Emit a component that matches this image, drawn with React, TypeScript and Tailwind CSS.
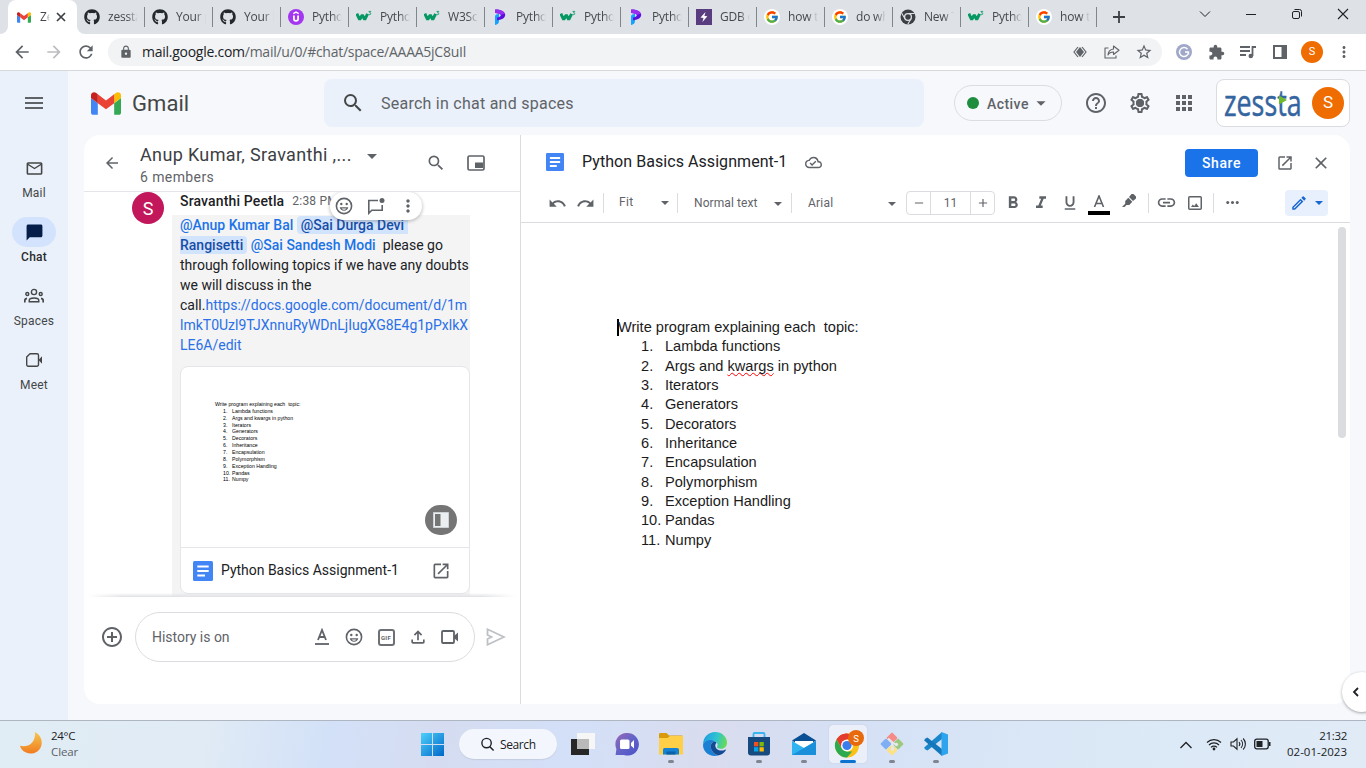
import React from "react";
import {
  MdMenu, MdSearch, MdArrowBack, MdArrowForward, MdRefresh, MdLock, MdMailOutline, MdChatBubble,
  MdHelpOutline, MdOutlineSettings, MdApps, MdMoreVert, MdOpenInNew,
  MdAddCircleOutline, MdFormatBold, MdFormatItalic, MdFormatUnderlined, MdLink,
  MdMoreHoriz, MdClose, MdStarOutline, MdExtension, MdOutlineModeEdit, MdArrowDropDown,
  MdOutlineCloudDone, MdAdd, MdRemove, MdOutlineFileUpload,
} from "react-icons/md";
import { FaGithub } from "react-icons/fa";
import { FcGoogle } from "react-icons/fc";

function GmailMark({ className }: { className: string }) {
  return (
    <svg viewBox="52 42 88 66" className={className}>
      <path fill="#4285f4" d="M58 108h14V74L52 59v43c0 3.32 2.69 6 6 6" />
      <path fill="#34a853" d="M120 108h14c3.32 0 6-2.69 6-6V59l-20 15" />
      <path fill="#fbbc04" d="M120 48v26l20-15v-8c0-7.42-8.47-11.65-14.4-7.2" />
      <path fill="#ea4335" d="M72 74V48l24 18 24-18v26L96 92" />
      <path fill="#c5221f" d="M52 51v8l20 15V48l-5.6-4.2c-5.94-4.45-14.4-.22-14.4 7.2" />
    </svg>
  );
}

const GitHubIcon = () => <FaGithub className="size-4 text-[#24292e]" />;
const UdemyIcon = () => (
  <svg viewBox="0 0 16 16" className="size-4">
    <circle cx="8" cy="8" r="8" fill="#a435f0" />
    <path d="M5.3 4.6 8 3.1l2.700 1.500" fill="none" stroke="#fff" strokeWidth="1.300" />
    <path d="M5.900 6.500v3.300a2.100 2.100 0 0 0 4.200 0V6.500" fill="none" stroke="#fff" strokeWidth="1.800" />
  </svg>
);
const W3Icon = () => (
  <svg viewBox="0 0 16 16" className="size-4">
    <path d="M0.8 4.6 3.7 10.6 6.3 6 8.7 10.6 11.6 4.8" fill="none" stroke="#059862" strokeWidth="3" strokeLinejoin="bevel" />
    <path d="M12.6 2.4h2.2l-1.2 1.5c1 0 1.3.6 1.1 1.2-.3.7-1.4.7-2 .3" fill="none" stroke="#059862" strokeWidth=".9" />
  </svg>
);
const ProgramizIcon = () => (
  <svg viewBox="0 0 16 16" className="size-4">
    <path d="M3 7.500C3 5.800 4.500 4.800 7 5v7c0 2-1.500 3.700-4 4z" fill="#14a4ff" />
    <path d="M3.200.4C7 .2 13.200 2 13.200 5.800c0 3.400-3.800 5.200-8.200 5.400V8.400c2-.2 3.800-1 3.800-2.200C8.800 4.900 6 4.200 3.200 4z" fill="#5b10e0" />
    <path d="M3.200.4C7 .2 11.800 1.800 12.900 4.400L8.800 6C8.500 4.900 6 4.200 3.200 4z" fill="#9b2ff0" />
  </svg>
);
const GdbIcon = () => (
  <svg viewBox="0 0 16 16" className="size-4">
    <path d="M0 0h16v16H0z" fill="#5a3d7e" />
    <path d="M9.5 3 4.5 8.6l3 .3L6.4 13l5-5.7-3-.3z" fill="#fff" />
  </svg>
);
const GoogleIcon = () => (
  <span className="flex size-4 items-center justify-center rounded-full bg-white">
    <FcGoogle className="size-[14px]" />
  </span>
);
const MonoChromeIcon = () => (
  <svg viewBox="0 0 16 16" className="size-4">
    <circle cx="8" cy="8" r="7.5" fill="#3c4043" />
    <circle cx="8" cy="8" r="3.4" fill="#3c4043" stroke="#dee1e6" strokeWidth="1.3" />
    <path d="M8 4.5h6.6M5 9.8 1.7 4.2M10.9 9.8 7.7 15.4" stroke="#dee1e6" strokeWidth="1.1" />
  </svg>
);

const tabs = [
  { Icon: GitHubIcon, title: "zessta" }, { Icon: GitHubIcon, title: "Your p" }, { Icon: GitHubIcon, title: "Your R" },
  { Icon: UdemyIcon, title: "Python" }, { Icon: W3Icon, title: "Python" }, { Icon: W3Icon, title: "W3Sch" },
  { Icon: ProgramizIcon, title: "Python" }, { Icon: W3Icon, title: "Python" }, { Icon: ProgramizIcon, title: "Python" },
  { Icon: GdbIcon, title: "GDB o" }, { Icon: GoogleIcon, title: "how t" }, { Icon: GoogleIcon, title: "do wh" },
  { Icon: MonoChromeIcon, title: "New T" }, { Icon: W3Icon, title: "Python" }, { Icon: GoogleIcon, title: "how t" },
];

function TabStrip() {
  return (
    <div className="flex h-[34px] bg-[#dee1e6] font-['Open_Sans',sans-serif] text-[12px] tracking-[-0.2px] text-[#45494d]">
      <div className="flex w-2 items-end bg-white">
        <div className="h-full w-2 rounded-br-lg bg-[#dee1e6]" />
      </div>
      <div className="flex w-[69px] items-center rounded-t-lg bg-white pl-[9px]">
        <GmailMark className="h-[11px] w-[14px]" />
        <span className="ml-[9px] w-[10px] overflow-hidden whitespace-nowrap [mask-image:linear-gradient(to_right,black_55%,transparent)]">Zes</span>
        <svg viewBox="0 0 10 10" className="ml-[6px] size-[10px]"><path d="M1 1l8 8M9 1 1 9" stroke="#3c4043" strokeWidth="1.7" /></svg>
      </div>
      {tabs.map(({ Icon, title }, i) => (
        <div key={i} className={i === 0 ? "flex w-[68px] items-center bg-white" : "flex w-[68px] items-center"}>
          <div className={i === 0 ? "flex h-full w-[67px] items-center rounded-bl-lg bg-[#dee1e6] pl-[7px]" : "flex w-[67px] items-center pl-[7px]"}>
            <Icon />
            <span className="ml-2 w-[30px] overflow-hidden whitespace-nowrap [mask-image:linear-gradient(to_right,black_65%,transparent)]">{title}</span>
          </div>
          <div className={i === 0 ? "flex h-full w-px items-center bg-[#dee1e6]" : "flex h-full w-px items-center"}><div className="h-5 w-px bg-[#80868b]" /></div>
        </div>
      ))}
      <div className="flex w-11 items-center justify-center">
        <svg viewBox="0 0 12 12" className="size-3"><path d="M6 0v12M0 6h12" stroke="#3c4043" strokeWidth="1.8" /></svg>
      </div>
      <div className="ml-auto flex h-7 w-[184px] items-center text-[#202124]">
        <div className="flex w-[46px] justify-center"><svg viewBox="0 0 12 12" className="size-3"><path d="M1 3.5 6 8.5l5-5" fill="none" stroke="currentColor" /></svg></div>
        <div className="flex w-[46px] justify-center"><svg viewBox="0 0 12 12" className="size-3"><path d="M1 6.5h10" stroke="currentColor" /></svg></div>
        <div className="flex w-[46px] justify-center"><svg viewBox="0 0 12 12" className="size-3"><rect x="1.5" y="3.5" width="7" height="7" rx="1.5" fill="none" stroke="currentColor" /><path d="M3.5 1.5h5a2 2 0 0 1 2 2v5" fill="none" stroke="currentColor" /></svg></div>
        <div className="flex w-[46px] justify-center"><svg viewBox="0 0 12 12" className="size-3"><path d="m1 1 10 10M11 1 1 11" stroke="currentColor" strokeWidth="1.1" /></svg></div>
      </div>
    </div>
  );
}

const cell32 = "flex w-8 items-center justify-center";

function AddressBar() {
  return (
    <div className="flex h-[37px] items-center border-b border-[#d6d8da] bg-white pl-[6px] pr-[6px] text-[#5f6368]">
      <div className={cell32}><MdArrowBack className="size-5" /></div>
      <div className={cell32}><MdArrowForward className="size-5 text-[#bbbdc0]" /></div>
      <div className={cell32}><MdRefresh className="size-5" /></div>
      <div className="ml-[6px] flex h-7 w-[1054px] items-center rounded-full bg-[#f1f3f4] pl-[11px] pr-[2px]">
        <MdLock className="size-[14px]" />
        <span className="-mt-px ml-[9px] font-['Open_Sans',sans-serif] text-[14px] tracking-[-0.26px] text-[#5f6368]"><span className="text-[#202124]">mail.google.com</span>/mail/u/0/#chat/space/AAAA5jC8uIl</span>
        <div className="ml-auto flex">
          <div className={cell32}>
            <svg viewBox="0 0 14 12" className="h-3 w-[14px]"><path d="M5 1 1 6l4 5M9 1l4 5-4 5" fill="none" stroke="#5f6368" strokeWidth="1.2" /><path d="m7 1 4 5-4 5-4-5z" fill="#5f6368" /></svg>
          </div>
          <div className={cell32}>
            <svg viewBox="0 0 16 14" className="h-[14px] w-4"><path d="M4.5 3H1v10h11v-2.500M9.500 4V1l5.500 4.300-5.500 4.200V7C6.500 7 5 8 4 10c.2-3.500 2-5.600 5.500-6z" fill="none" stroke="#5f6368" strokeWidth="1.1" strokeLinejoin="round" /></svg>
          </div>
          <div className={cell32}><MdStarOutline className="size-[18px]" /></div>
        </div>
      </div>
      <div className="ml-[6px] flex items-center">
        <div className={cell32}>
          <svg viewBox="0 0 16 16" className="size-4"><circle cx="8" cy="8" r="8" fill="#a0a8c9" /><path d="M11.500 5.200A4.500 4.500 0 1 0 12.500 8H9M12.500 8v2.500" fill="none" stroke="#fff" strokeWidth="1.400" /></svg>
        </div>
        <div className={cell32}><MdExtension className="size-[17px]" /></div>
        <div className={cell32}>
          <svg viewBox="0 0 16 14" className="h-[14px] w-4"><path d="M0 2h10M0 6h10M0 10h6M12.500 11V2H16" fill="none" stroke="#5f6368" strokeWidth="1.800" /><circle cx="10.800" cy="11" r="2.300" fill="#5f6368" /></svg>
        </div>
        <div className={cell32}>
          <svg viewBox="0 0 14 14" className="size-[14px]"><path d="M1 1h12v12H1z" fill="none" stroke="#5f6368" strokeWidth="2" /><path d="M8.500 1H13v12H8.500z" fill="#5f6368" /></svg>
        </div>
        <div className={cell32}><div className="flex size-[22px] items-center justify-center rounded-full bg-[#ef6c00] font-['Roboto',sans-serif] text-[11px] text-white">S</div></div>
        <div className={cell32}><MdMoreVert className="size-[18px]" /></div>
      </div>
    </div>
  );
}

const CameraIcon = () => (
  <svg viewBox="0 0 18 16" className="h-4 w-[18px]"><path d="M5 1.800h7a1.500 1.500 0 0 1 1.500 1.500v9.400a1.500 1.500 0 0 1-1.500 1.500H3.200a1.500 1.500 0 0 1-1.500-1.500V5z" fill="none" stroke="#444746" strokeWidth="1.400" strokeLinejoin="round" /><path d="M13.500 8 17 4.300v7.400z" fill="#444746" /></svg>
);
const GroupsIcon = () => (
  <svg viewBox="0 0 20 16" className="h-4 w-5" fill="none" stroke="#444746" strokeWidth="1.400">
    <circle cx="10" cy="4" r="2.600" />
    <circle cx="3.300" cy="6" r="1.500" />
    <circle cx="16.700" cy="6" r="1.500" />
    <path d="M5.200 13.800v-1.300C5.200 10.800 7.500 10 10 10s4.800.8 4.800 2.500v1.300z" />
    <path d="M.8 14.500v-2c0-1.200.8-2 2.200-2.200M19.200 14.500v-2c0-1.200-.8-2-2.200-2.200" strokeWidth="1.700" />
  </svg>
);

function Rail() {
  return (
    <nav className="flex w-[68px] flex-col items-center bg-[#eaf1fb] font-['Roboto',sans-serif] text-[#444746]">
      <MdMenu className="mt-5 size-6 text-[#5f6368]" />
      <div className="mt-[38px] flex h-16 flex-col items-center">
        <div className="flex h-[30px] w-11 items-center justify-center"><MdMailOutline className="size-[19px]" /></div>
        <span className="mt-[2px] text-[12px] leading-4 tracking-[0.2px]">Mail</span>
      </div>
      <div className="flex h-16 flex-col items-center">
        <div className="flex h-[30px] w-11 items-center justify-center rounded-full bg-[#d3e3fd]"><MdChatBubble className="size-[19px] text-[#041e49]" /></div>
        <span className="mt-[2px] text-[12px] font-medium leading-4 tracking-[0.2px] text-[#2a2b2c]">Chat</span>
      </div>
      <div className="flex h-16 flex-col items-center">
        <div className="flex h-[30px] w-11 items-center justify-center"><GroupsIcon /></div>
        <span className="mt-[2px] text-[12px] leading-4 tracking-[0.2px]">Spaces</span>
      </div>
      <div className="flex h-16 flex-col items-center">
        <div className="flex h-[30px] w-11 items-center justify-center"><CameraIcon /></div>
        <span className="mt-[2px] text-[12px] leading-4 tracking-[0.2px]">Meet</span>
      </div>
    </nav>
  );
}

function Header() {
  return (
    <header className="flex h-16 items-center pl-[23px] pr-4 font-['Roboto',sans-serif] text-[#5f6368]">
      <GmailMark className="h-[23px] w-[30px]" />
      <span className="ml-[11px] w-[192px] pt-px text-[22px] tracking-[0.05px] text-[#444746]">Gmail</span>
      <div className="flex h-12 w-[600px] items-center rounded-lg bg-[#eaf1fb] pl-[17px]">
        <MdSearch className="size-6 text-[#444746]" />
        <span className="ml-4 pt-[2px] text-[16px] tracking-[0.25px]">Search in chat and spaces</span>
      </div>
      <div className="ml-[30px] flex h-9 w-[108px] items-center rounded-full border border-[#dadce0] pl-3">
        <span className="size-3 rounded-full bg-[#1e8e3e]" />
        <span className="ml-[8px] pt-[2px] text-[14px] font-medium tracking-[0.45px]">Active</span>
        <MdArrowDropDown className="ml-px size-[22px]" />
      </div>
      <div className="ml-3 flex">
        <div className="flex w-11 justify-center"><MdHelpOutline className="size-6" /></div>
        <div className="flex w-11 justify-center">
          <div className="relative">
            <MdOutlineSettings className="size-6" />
            <span className="absolute left-2 top-2 size-2 rounded-full bg-[#5f6368]" />
          </div>
        </div>
        <div className="flex w-11 justify-center"><MdApps className="size-6" /></div>
      </div>
      <div className="ml-[10px] flex h-12 w-[134px] items-center rounded-lg border border-[#dadce0] bg-white pl-[7px]">
        <svg viewBox="0 0 80 34" className="h-[34px] w-20 shrink-0">
          <text transform="scale(.745 1)" x="0" y="30" fontFamily="Open Sans, sans-serif" fontSize="36" fill="#3465a0" stroke="#3465a0" strokeWidth=".5">zessta</text>
          <path d="M55 9.500v9l8-4.500z" fill="#6fb92c" />
        </svg>
        <div className="ml-2 flex size-8 shrink-0 items-center justify-center rounded-full bg-[#ef6c00] text-[17px] text-white">S</div>
      </div>
    </header>
  );
}

const SmileIcon = ({ className }: { className: string }) => (
  <svg viewBox="0 0 18 18" className={className}><circle cx="9" cy="9" r="7.600" fill="none" stroke="#5f6368" strokeWidth="1.600" /><circle cx="6.300" cy="7" r="1.200" fill="#5f6368" /><circle cx="11.700" cy="7" r="1.200" fill="#5f6368" /><path d="M4.700 10.300h8.600a4.400 4.400 0 0 1-8.600 0z" fill="#5f6368" /><path d="M6.600 11.600h4.800a2.900 2.900 0 0 1-4.800 0z" fill="#fff" /></svg>
);
const DocsIcon = ({ className }: { className: string }) => (
  <svg viewBox="0 0 20 20" className={className}><rect width="20" height="20" rx="1.500" fill="#4285f4" /><path d="M4.300 5.500h11.400M4.300 10h11.400M4.300 14.500h7.700" stroke="#fff" strokeWidth="2.200" /></svg>
);

const topics = [
  "Lambda functions", "Args and kwargs in python", "Iterators", "Generators", "Decorators", "Inheritance",
  "Encapsulation", "Polymorphism", "Exception Handling", "Pandas", "Numpy",
];

function ChatPanel() {
  return (
    <section className="flex w-[437px] flex-col border-r border-[#dadce0] font-['Roboto',sans-serif]">
      <div className="flex h-[57px] shrink-0 border-b border-[#e3e5e8] text-[#5f6368]">
        <MdArrowBack className="ml-[19px] mt-[19px] size-[18px]" />
        <div className="ml-[19px] w-[218px] pt-[8px]">
          <div className="whitespace-pre text-[18px] leading-6 tracking-[0.35px] text-[#3c4043]">Anup Kumar, Sravanthi ,...</div>
          <div className="text-[14px] leading-5 tracking-[0.4px]">6 members</div>
        </div>
        <MdArrowDropDown className="ml-[2px] mt-[9px] size-[24px] shrink-0" />
        <MdSearch className="ml-[42px] mt-[18px] size-5" />
        <svg viewBox="0 0 18 16" className="ml-[21px] mt-5 h-4 w-[18px]"><rect x="1" y="1" width="16" height="14" rx="1.500" fill="none" stroke="#5f6368" strokeWidth="1.700" /><path d="M8 7.500h8V13H8z" fill="#5f6368" /></svg>
      </div>
      <div className="relative flex h-[405px] shrink-0 overflow-hidden pl-12">
        <div className="flex size-8 shrink-0 items-center justify-center rounded-full bg-[#c2185b] text-[18px] text-white">S</div>
        <div className="ml-2 w-[298px]">
          <div className="flex h-6 items-start pl-2">
            <span className="text-[14px] font-medium leading-[19px] tracking-[0.15px] text-[#202124]">Sravanthi Peetla</span>
            <span className="ml-2 text-[12px] leading-[19px] tracking-[0.2px] text-[#5f6368]">2:38 PM</span>
          </div>
          <div className="h-[381px] bg-[#f4f4f4] pl-2">
            <div className="-mt-px whitespace-pre text-[14px] leading-5 text-[#202124]">
              <div className="font-medium text-[#1a73e8]">@Anup Kumar Bal <span className="rounded-l bg-[#d2e3fc] py-px pl-1 text-[#174ea6]">@Sai Durga Devi </span></div>
              <div><span className="rounded-r bg-[#d2e3fc] py-px pr-1 font-medium text-[#174ea6]">Rangisetti</span> <span className="font-medium text-[#1a73e8]">@Sai Sandesh Modi</span>  please go</div>
              <div>through following topics if we have any doubts</div>
              <div>we will discuss in the</div>
              <div>call.<span className="text-[#2a70e8]">https://docs.google.com/document/d/1m</span></div>
              <div className="text-[#2a70e8]">lmkT0Uzl9TJXnnuRyWDnLjIugXG8E4g1pPxlkX</div>
              <div className="text-[#2a70e8]">LE6A/edit</div>
            </div>
            <div className="mt-[11px] flex h-[228px] w-[290px] flex-col rounded-lg border border-[#e4e6ea] bg-white">
              <div className="flex h-[181px] justify-between border-b border-[#e4e6ea]">
                <div className="pl-[34px] pt-[34px] font-['Liberation_Sans',sans-serif] text-[5.200px] leading-[6.860px] text-black">
                  <div className="whitespace-pre">Write program explaining each  topic:</div>
                  {topics.map((t, i) => (
                    <div key={t} className="flex pl-[8px]"><span className="w-[9px]">{i + 1}.</span>{t}</div>
                  ))}
                </div>
                <div className="mr-3 mt-[138px] flex h-[30px] w-8 items-center justify-center rounded-full bg-[#757575]">
                  <svg viewBox="0 0 16 16" className="size-4"><path d="M.5.5h15v15H.5z" fill="#eceff1" stroke="#cfd2d4" /><path d="M2 2h5.500v12H2z" fill="#757575" /></svg>
                </div>
              </div>
              <div className="flex flex-1 items-center pl-3 pr-[18px]">
                <DocsIcon className="size-5" />
                <span className="ml-2 text-[14px] tracking-[-0.02px] text-[#202124]">Python Basics Assignment-1</span>
                <MdOpenInNew className="ml-auto size-5 text-[#5f6368]" />
              </div>
            </div>
          </div>
        </div>
        <div className="absolute left-[246px] top-0 flex h-7 w-[92px] items-center rounded-full bg-white pl-[5px] shadow-[0_1px_3px_1px_rgba(60,64,67,0.25)]">
          <SmileIcon className="size-[18px]" />
          <svg viewBox="0 0 18 18" className="ml-[14px] size-[18px]"><path d="M11 3.500H1.800v12.700l3-3h10.400V8" fill="none" stroke="#5f6368" strokeWidth="1.600" /><circle cx="15" cy="3.500" r="2.500" fill="#5f6368" /></svg>
          <MdMoreVert className="ml-[13px] size-5 text-[#5f6368]" />
        </div>
        <div className="absolute bottom-0 left-1 h-1 w-[428px] bg-gradient-to-b from-transparent to-[#dfe0e4] [mask-image:linear-gradient(to_right,transparent,black_8%,black_92%,transparent)]" />
      </div>
      <div className="flex items-start pl-4 pt-[15px] text-[#5f6368]">
        <MdAddCircleOutline className="mt-[13px] size-6 shrink-0" />
        <div className="ml-[11px] flex h-[50px] w-[340px] shrink-0 items-center rounded-full border border-[#dadce0] pl-4">
          <span className="w-[154px] text-[14px] tracking-[-0.02px]">History is on</span>
          <div className={cell32}>
            <svg viewBox="0 0 14 18" className="h-[18px] w-[14px]"><path d="M3 12 7 2l4 10M4.300 9h5.400" fill="none" stroke="#5f6368" strokeWidth="1.800" /><path d="M0 16h14" stroke="#5f6368" strokeWidth="1.800" /></svg>
          </div>
          <div className={cell32}><SmileIcon className="size-[18px]" /></div>
          <div className={cell32}><div className="flex size-[17px] items-center justify-center rounded-[3px] border-2 border-[#6d7175] text-[6px] font-bold tracking-[0.3px]">GIF</div></div>
          <div className={cell32}><MdOutlineFileUpload className="size-5" /></div>
          <div className={cell32}>
            <svg viewBox="0 0 18 14" className="h-[14px] w-[18px]"><rect x="1" y="1" width="12" height="12" rx="1" fill="none" stroke="#5f6368" strokeWidth="1.800" /><path d="M13 6 17 2.500v9L13 8z" fill="#5f6368" /></svg>
          </div>
        </div>
        <svg viewBox="0 0 20 18" className="ml-[11px] mt-4 h-[18px] w-5 shrink-0"><path d="M1.500 1.300 18 9 1.500 16.700V11l4-2-4-2z" fill="none" stroke="#bdc1c6" strokeWidth="1.800" /></svg>
      </div>
    </section>
  );
}

const Caret = ({ className = "" }: { className?: string }) => (
  <svg viewBox="0 0 8 4" className={"h-1 w-2 shrink-0 " + className}><path d="M0 0h8L4 4z" fill="currentColor" /></svg>
);
const Divider = ({ className = "" }: { className?: string }) => <div className={"h-5 w-px shrink-0 bg-[#dadce0] " + className} />;

function DocPanel() {
  return (
    <section className="flex flex-1 flex-col font-['Roboto',sans-serif] text-[#5f6368]">
      <div className="flex h-[52px] shrink-0 items-center pl-[25px] pr-[19px] pt-[2px]">
        <DocsIcon className="size-[18px]" />
        <span className="ml-[18px] text-[16px] tracking-[0.06px] text-[#202124]">Python Basics Assignment-1</span>
        <MdOutlineCloudDone className="ml-[18px] size-[17px]" />
        <div className="ml-auto mt-[2px] flex h-7 w-[73px] items-center justify-center rounded bg-[#1a73e8] text-[14px] font-medium tracking-[0.6px] text-white">Share</div>
        <MdOpenInNew className="ml-[18px] mt-[2px] size-[18px]" />
        <MdClose className="ml-[17px] mt-[2px] size-5" />
      </div>
      <div className="flex h-[36px] shrink-0 items-center border-b border-[#dadce0] pb-1 pl-[22px] text-[12px]">
        <div className="flex w-7 justify-center">
          <svg viewBox="0 0 24 24" className="mt-px h-[19px] w-[19px]"><path d="M12.500 8c-2.650 0-5.050.99-6.900 2.600L2 7v9h9l-3.620-3.620c1.390-1.160 3.160-1.880 5.120-1.880 3.540 0 6.550 2.310 7.600 5.500l2.370-.78C21.080 11.030 17.150 8 12.500 8z" fill="currentColor" /></svg>
        </div>
        <div className="flex w-7 justify-center">
          <svg viewBox="0 0 24 24" className="mt-px h-[19px] w-[19px]"><path d="M18.400 10.600C16.550 8.990 14.150 8 11.500 8c-4.650 0-8.580 3.030-9.960 7.220L3.900 16c1.050-3.190 4.050-5.500 7.600-5.500 1.950 0 3.730.72 5.120 1.880L13 16h9V7l-3.600 3.600z" fill="currentColor" /></svg>
        </div>
        <Divider className="ml-1" />
        <div className="flex w-[73px] items-center justify-between pl-[15px] pr-2"><span className="-mt-[2px] tracking-[0.4px]">Fit</span><Caret /></div>
        <Divider />
        <div className="flex w-[113px] items-center justify-between pl-4 pr-[9px]"><span className="tracking-[0.08px]">Normal text</span><Caret className="mt-[2px]" /></div>
        <Divider />
        <div className="flex w-[114px] items-center justify-between pl-4 pr-[10px]"><span className="tracking-[0.2px]">Arial</span><Caret className="mt-[2px]" /></div>
        <div className="flex h-6 w-[89px] items-stretch rounded-sm border border-[#dadce0]">
          <div className="flex w-6 items-center justify-center border-r border-[#dadce0]"><MdRemove className="size-[14px]" /></div>
          <div className="flex flex-1 items-center justify-center">11</div>
          <div className="flex w-6 items-center justify-center border-l border-[#dadce0]"><MdAdd className="size-[14px]" /></div>
        </div>
        <div className="ml-1 flex w-7 justify-center"><MdFormatBold className="size-5" /></div>
        <div className="flex w-7 justify-center"><MdFormatItalic className="size-5" /></div>
        <div className="flex w-[30px] justify-center"><MdFormatUnderlined className="size-[18px]" /></div>
        <div className="flex w-7 flex-col items-center pt-1">
          <svg viewBox="0 0 12 12" className="size-3"><path d="M1.500 12 6 1l4.500 11M3 8.500h6" fill="none" stroke="#5f6368" strokeWidth="1.600" /></svg>
          <div className="mt-1 h-1 w-[22px] bg-black" />
        </div>
        <div className="flex w-8 justify-center">
          <svg viewBox="0 0 14 14" className="mb-1 size-[14px]"><path d="M9.500 0h2l2.500 2.500v2L11 7 7 3zM6.300 3.800l4 4-3 3.200H4.500L2.500 13H0l3.200-3.200V7z" fill="#5f6368" /></svg>
        </div>
        <Divider className="ml-[3px]" />
        <div className="flex w-[34px] justify-center"><MdLink className="size-[21px]" /></div>
        <div className="flex w-6 justify-center"><svg viewBox="0 0 14 14" className="size-[14px]"><rect x=".75" y=".75" width="12.500" height="12.500" rx="1" fill="none" stroke="#5f6368" strokeWidth="1.500" /><path d="m3 11 1.800-2.500L6.200 10l2-2.800L11 11z" fill="#5f6368" /></svg></div>
        <Divider className="ml-[6px]" />
        <div className="flex w-9 justify-center"><MdMoreHoriz className="size-[19px]" /></div>
        <div className="ml-[35px] flex h-[26px] w-[43px] items-center rounded bg-[#e8f0fe] pl-[5px] text-[#1967d2]">
          <MdOutlineModeEdit className="size-[18px]" />
          <Caret className="ml-[7px]" />
        </div>
      </div>
      <div className="flex flex-1 justify-between">
        <div className="pl-[96px] pt-[95px] font-['Liberation_Sans',sans-serif] text-[14.600px] leading-[19.350px] text-[#1b1b1b]">
          <div className="flex whitespace-pre"><span className="-mr-[1px] mt-px h-[17px] w-[2px] bg-black" />Write program explaining each  topic:</div>
          {topics.map((t, i) => (
            <div key={t} className="flex whitespace-pre pl-[24px]">
              <span className="w-6">{i + 1}.</span>
              {i === 1 ? (
                <span>Args and <span className="underline decoration-[#ff0000] decoration-wavy decoration-[1px] underline-offset-[1px] [text-decoration-skip-ink:none]">kwargs</span> in python</span>
              ) : (
                <span>{t}</span>
              )}
            </div>
          ))}
        </div>
        <div className="mr-1 mt-1 h-[211px] w-2 rounded-full bg-[#dadce0]" />
      </div>
    </section>
  );
}

const TaskViewIcon = () => (
  <svg viewBox="0 0 24 24" className="size-6"><path d="M0 7h18v16H0z" fill="#272727" /><path d="M6 1h18v16H6z" fill="#f6f6f6" /><path d="M6 7h12v10H6z" fill="#b9b9b9" /></svg>
);
const TeamsIcon = () => (
  <svg viewBox="0 0 24 24" className="size-6"><defs><linearGradient id="tm" x1="0" y1="0" x2="1" y2="1"><stop stopColor="#9a67b5" /><stop offset=".5" stopColor="#6264c7" /><stop offset="1" stopColor="#4a50c8" /></linearGradient></defs><path d="M12 1a11.300 11.300 0 1 1-3 22H.6l.8-6A11.300 11.300 0 0 1 12 1z" fill="url(#tm)" /><rect x="5" y="7.500" width="9.500" height="9.500" rx="1.500" fill="#fff" /><path d="m16 11 3-3v8.500l-3-3z" fill="#fff" /></svg>
);
const FolderIcon = () => (
  <svg viewBox="0 0 24 24" className="size-6"><path d="M0 2.500C0 1.500.6 1 1.500 1h6L10 3.500h12.500c1 0 1.500.5 1.500 1.500v4H0z" fill="#d99a0c" /><path d="M0 6h8.500L11 4h13v18.500H0z" fill="#ffcf48" /><path d="M4 22.500V18c0-1.500.7-2 2-2h12c1.300 0 2 .7 2 2v4.500z" fill="#1582d4" /><path d="M7.500 19.500h9v3h-9z" fill="#0b60a8" /></svg>
);
const EdgeIcon = () => (
  <svg viewBox="0 0 24 24" className="size-6">
    <defs>
      <linearGradient id="eg" x1="0" y1=".3" x2="1" y2=".5"><stop stopColor="#1f9be0" /><stop offset=".55" stopColor="#2fc3d2" /><stop offset="1" stopColor="#66dc52" /></linearGradient>
    </defs>
    <path d="M0 13C0 5 5.500 0 12.200 0 19 0 24 5 24 10.500c0 4-2.700 6.300-6.200 6.300-2.600 0-4.300-.8-3.700-2 .9-1.300.6-3.800-1.400-5C7.500 6.500 1 8.500 0 13z" fill="url(#eg)" />
    <path d="M0 13C1 8.500 7.500 6.500 12 9.500 8.500 9.500 7 13 8 16.500c1 3.800 4.500 6.500 8 6.800C7 26 0 20 0 13z" fill="#1b80d4" />
    <path d="M12 9.500c-3.500.5-5 3.500-4 7 1 3.800 4.500 6.500 8 6.800 3-.6 5.300-2.600 6.800-5 .3-.6-.2-.9-.8-.6C17.500 20 12.300 17.500 12.300 13.500c0-1.300.6-2.200 1.200-2.800-.4-.6-.9-1-1.500-1.200z" fill="#124a93" />
  </svg>
);
const StoreIcon = () => (
  <svg viewBox="0 0 24 24" className="size-6"><path d="M6.500 6V2c0-.6.400-1 1-1h9c.6 0 1 .4 1 1v4" fill="none" stroke="#38b6ee" strokeWidth="1.800" /><path d="M1 5h22v15.500c0 2-1 3-3 3H4c-2 0-3-1-3-3z" fill="#174b80" /><path d="M7 10h4.300v4.300H7z" fill="#f25022" /><path d="M12.500 10h4.300v4.300h-4.300z" fill="#7fba00" /><path d="M7 15.200h4.300v4.300H7z" fill="#00a4ef" /><path d="M12.500 15.200h4.300v4.300h-4.300z" fill="#ffb900" /></svg>
);
const MailIcon = () => (
  <svg viewBox="0 0 24 24" className="size-6"><path d="M0 8.500 12 1l12 7.500-12 8z" fill="#0a4e93" /><path d="M3 9h18v6l-9 4-9-4z" fill="#fff" /><path d="M0 9l12 7 12-7v14H0z" fill="#2fb3f1" /><path d="M0 23 24 9v14z" fill="#1c8fdb" /></svg>
);
const ChromeIcon = () => (
  <svg viewBox="0 0 32 28" className="h-7 w-8">
    <g transform="translate(3 3)"><circle cx="12" cy="12.500" r="12" fill="#fbc116" /><path d="M1.600 6.500A12 12 0 0 1 22.400 6.500H12z" fill="#e33b2e" /><path d="M1.600 6.500A12 12 0 0 1 12 .5v6l-5.200 9z" fill="#e33b2e" /><path d="M1.600 6.500 6.800 15.500 12 18.500h5.200L12 24.500A12 12 0 0 1 1.600 6.500z" fill="#2da94f" /><circle cx="12" cy="12.500" r="6" fill="#fff" /><circle cx="12" cy="12.500" r="4.600" fill="#3b7ded" /></g>
    <circle cx="24" cy="8" r="8" fill="#e8690b" />
    <text x="24" y="11.500" textAnchor="middle" fontFamily="Roboto, sans-serif" fontSize="9.500" fill="#fff">S</text>
  </svg>
);
const GitIcon = () => (
  <svg viewBox="0 0 24 24" className="size-6"><g transform="rotate(45 12 12)"><rect x="3.700" y="3.700" width="8" height="8" rx="1" fill="#f58a86" /><rect x="12.300" y="3.700" width="8" height="8" rx="1" fill="#9cc97e" /><rect x="3.700" y="12.300" width="8" height="8" rx="1" fill="#7faef5" /><rect x="12.300" y="12.300" width="8" height="8" rx="1" fill="#fde183" /></g><path d="M8 6.500l4.500 4v7M12.500 10.500l4 2.500" fill="none" stroke="#e6e8ee" strokeWidth="2" /><circle cx="12.500" cy="17" r="1.700" fill="#e6e8ee" /><circle cx="16.500" cy="12.500" r="1.700" fill="#e6e8ee" /></svg>
);
const CodeIcon = () => (
  <svg viewBox="0 0 24 24" className="size-6"><path d="M18 0v7L3.500 18.500 1 17.200.2 15.500z" fill="#1a86cc" /><path d="M18 24v-7L3.500 5.500 1 6.800.2 8.500z" fill="#1577bb" /><path d="M17.500 0 24 2.500v19L17.500 24z" fill="#2fa4ee" /></svg>
);

const apps = [
  { Icon: TaskViewIcon, open: false }, { Icon: TeamsIcon, open: false }, { Icon: FolderIcon, open: true },
  { Icon: EdgeIcon, open: false }, { Icon: StoreIcon, open: true }, { Icon: MailIcon, open: true },
  { Icon: ChromeIcon, open: true, active: true }, { Icon: GitIcon, open: true }, { Icon: CodeIcon, open: true },
];

function Taskbar() {
  return (
    <footer className="flex h-12 border-t border-[#aeb6c2] bg-[linear-gradient(100deg,#e1edf5_0%,#e0ebf5_15%,#d3e1f8_24%,#d5dcf1_32%,#d3e0f8_42%,#d9dcee_52%,#d5e0f5_62%,#d9e7f6_75%,#e0ebf6_100%)] font-['Open_Sans',sans-serif] text-[12px] text-[#202124]">
      <div className="flex w-[410px] items-start pl-5 pt-[7px]">
        <svg viewBox="0 0 24 24" className="mt-[3px] size-[23px]"><defs><linearGradient id="mn" x1="0" y1="0" x2="0" y2="1"><stop stopColor="#f6c650" /><stop offset="1" stopColor="#f07c1f" /></linearGradient></defs><path d="M15.500 1C26 6 25 22 12 23.500 6 24 1 20 0 15.500 9 18 17 11 15.500 1z" fill="url(#mn)" /></svg>
        <div className="ml-2 text-[11.500px] leading-4 tracking-[-0.3px]"><div>24°C</div><div className="tracking-[-0.1px] text-[#5c6066]">Clear</div></div>
      </div>
      <div className="flex w-[44px] items-center justify-center">
        <svg viewBox="0 0 23 23" className="size-[23px]"><defs><linearGradient id="wn" x1="0" y1="0" x2="1" y2="1"><stop stopColor="#4dd0fb" /><stop offset="1" stopColor="#0067c8" /></linearGradient></defs><path d="M0 0h11v11H0zM12 0h11v11H12zM0 12h11v11H0zM12 12h11v11H12z" fill="url(#wn)" /></svg>
      </div>
      <div className="ml-[5px] mt-2 flex h-[30px] w-[98px] items-center rounded-full bg-[#f3f6fc] pl-[21px] shadow-[0_1px_1px_rgba(0,0,0,0.08)]">
        <svg viewBox="0 0 16 16" className="size-[15px]"><circle cx="7" cy="6.500" r="5" fill="none" stroke="#202124" strokeWidth="1.500" /><path d="m10.500 10.500 4 4" stroke="#202124" strokeWidth="1.600" /></svg>
        <span className="ml-[5px] mt-[2px] text-[12px] tracking-[-0.4px]">Search</span>
      </div>
      <div className="ml-[4px] flex">
        {apps.map(({ Icon, open, active }, i) => (
          <div key={i} className="flex w-[44.100px] justify-center pt-1">
            <div className={active ? "flex h-[38px] w-[38px] flex-col items-center rounded bg-[#ebeff9] shadow-[0_0_1px_rgba(0,0,0,0.2)]" : "flex h-[38px] w-[38px] flex-col items-center"}>
              <div className="flex h-[35px] items-center justify-center pt-[3px]"><Icon /></div>
              {open && <div className={active ? "h-[3px] w-4 rounded-full bg-[#0b74d1]" : "h-[3px] w-[6px] rounded-full bg-[#81858f]"} />}
            </div>
          </div>
        ))}
      </div>
      <div className="ml-auto flex items-center pr-[19px]">
        <svg viewBox="0 0 12 8" className="h-2 w-3"><path d="m.5 7 5.500-5.500L11.500 7" fill="none" stroke="#202124" strokeWidth="1.300" /></svg>
        <svg viewBox="0 0 16 14" className="-mt-[2px] ml-[14px] h-[14px] w-4"><path d="M1 5.500a10 10 0 0 1 14 0M3 8a7 7 0 0 1 10 0M5 10.400a4.200 4.200 0 0 1 6 0" fill="none" stroke="#202124" strokeWidth="1.200" /><circle cx="8" cy="12" r="1.400" fill="#202124" /></svg>
        <svg viewBox="0 0 17 14" className="-mt-[1px] ml-2 h-[14px] w-[17px]"><path d="M1 5h2.500L7 1.800v10.400L3.500 9H1zM9 5a3 3 0 0 1 0 4M11 3a6 6 0 0 1 0 8M13.200 1.500a8 8 0 0 1 0 11" fill="none" stroke="#202124" strokeWidth="1.100" /></svg>
        <svg viewBox="0 0 17 12" className="-mt-[1px] ml-[7px] h-3 w-[17px]"><rect x=".7" y="1.200" width="13.500" height="9.600" rx="2" fill="none" stroke="#202124" strokeWidth="1.300" /><path d="M2.500 3h6v6h-6zM15 4h1.500v4H15z" fill="#202124" /></svg>
        <div className="-mt-[2px] ml-[15px] w-[61px] whitespace-nowrap text-right text-[11.500px] leading-4 tracking-[0px]"><div className="tracking-[-0.3px]">21:32</div><div>02-01-2023</div></div>
      </div>
    </footer>
  );
}

export default function App() {
  return (
    <div className="flex h-[768px] w-[1366px] flex-col overflow-hidden">
      <TabStrip />
      <AddressBar />
      <div className="relative flex h-[649px] overflow-hidden bg-[#f6f8fc]">
        <Rail />
        <div className="flex flex-1 flex-col">
          <Header />
          <main className="ml-4 mr-4 flex h-[569px] overflow-hidden rounded-2xl bg-white">
            <ChatPanel />
            <DocPanel />
          </main>
        </div>
        <div className="absolute -right-4 top-[601px] flex size-10 items-center rounded-full bg-white pl-[10px] shadow-[0_1px_3px_rgba(60,64,67,0.45)]">
          <svg viewBox="0 0 8 10" className="h-[10px] w-2"><path d="M6 1 2 5l4 4" fill="none" stroke="#202124" strokeWidth="1.800" /></svg>
        </div>
      </div>
      <Taskbar />
    </div>
  );
}
